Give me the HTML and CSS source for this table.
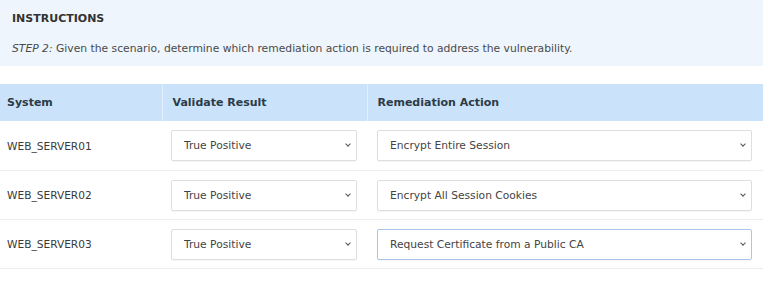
FILE: index.html
```html
<!DOCTYPE html>
<html lang="en">
<head>
    <meta charset="UTF-8">
    <title>Instructions - Remediation</title>
    <link rel="stylesheet" href="styles.css">
</head>
<body>

    <!-- ИНСТРУКЦИЯ -->
    <section class="instructions">
        <h2>INSTRUCTIONS</h2>
        <p><em>STEP 2:</em> Given the scenario, determine which remediation action is required to address the vulnerability.</p>
    </section>

    <table class="grid">
        <thead>
            <tr>
                <th class="col-system">System</th>
                <th class="col-result">Validate Result</th>
                <th>Remediation Action</th>
            </tr>
        </thead>
        <tbody>
            <tr>
                <td>WEB_SERVER01</td>
                <td><div class="pick"><select><option>True Positive</option></select></div></td>
                <td><div class="pick"><select><option>Encrypt Entire Session</option></select></div></td>
            </tr>
            <tr>
                <td>WEB_SERVER02</td>
                <td><div class="pick"><select><option>True Positive</option></select></div></td>
                <td><div class="pick"><select><option>Encrypt All Session Cookies</option></select></div></td>
            </tr>
            <tr>
                <td>WEB_SERVER03</td>
                <td><div class="pick"><select><option>True Positive</option></select></div></td>
                <td><div class="pick active"><select><option>Request Certificate from a Public CA</option></select></div></td>
            </tr>
        </tbody>
    </table>

</body>
</html>
```

FILE: styles.css
```css
/* БАЗА */
:root {
    --panel: #eef5fc;
    --head: #cbe3fa;
    --text: #3a3a3a;
    --line: #ececec;
}

* { margin: 0; padding: 0; box-sizing: border-box; }
body { font-family: 'DejaVu Sans', Verdana, sans-serif; font-size: 11px; color: var(--text); background: #fff; }

/* ИНСТРУКЦИЯ */
.instructions {
    background: var(--panel);
    height: 66px;
    padding: 12px 12px 0;
    margin-bottom: 18px;
}

.instructions h2 { font-size: 11px; font-weight: bold; color: #333; margin-bottom: 17px; }
.instructions p { font-size: 10.75px; color: #4a4a4a; }

/* ТАБЛИЦА */
.grid { width: 100%; border-collapse: collapse; }

.grid th {
    background: var(--head);
    height: 37px;
    text-align: left;
    font-size: 11px;
    font-weight: bold;
    color: #2d3b48;
    padding: 0 10px;
    border-left: 1px solid #e2effc;
}

.grid th:first-child { border-left: none; padding-left: 7px; }
.col-system { width: 162px; }
.col-result { width: 205px; }

.grid td {
    height: 49px;
    padding: 1px 10px 0 9px;
    border-bottom: 1px solid var(--line);
    font-size: 10.6px;
}

.grid td:first-child { padding-left: 7px; }
.grid td:nth-child(3) { padding-left: 10px; padding-right: 11px; }

/* ВЫПАДАЮЩИЕ СПИСКИ */
.pick { position: relative; }

.pick select {
    appearance: none;
    -webkit-appearance: none;
    width: 100%;
    height: 31px;
    border: 1px solid #dedede;
    border-radius: 2px;
    background: #fff;
    font-family: inherit;
    font-size: 10.7px;
    color: #444;
    padding: 0 24px 0 12px;
    box-shadow: 0 1px 1px rgba(0,0,0,0.04);
}

.pick.active select { border-color: #a9c6ea; }

.pick::after {
    content: '';
    position: absolute;
    right: 7px;
    top: 12px;
    width: 3px;
    height: 3px;
    border-right: 1.5px solid #555;
    border-bottom: 1.5px solid #555;
    transform: rotate(45deg);
    pointer-events: none;
}
```
